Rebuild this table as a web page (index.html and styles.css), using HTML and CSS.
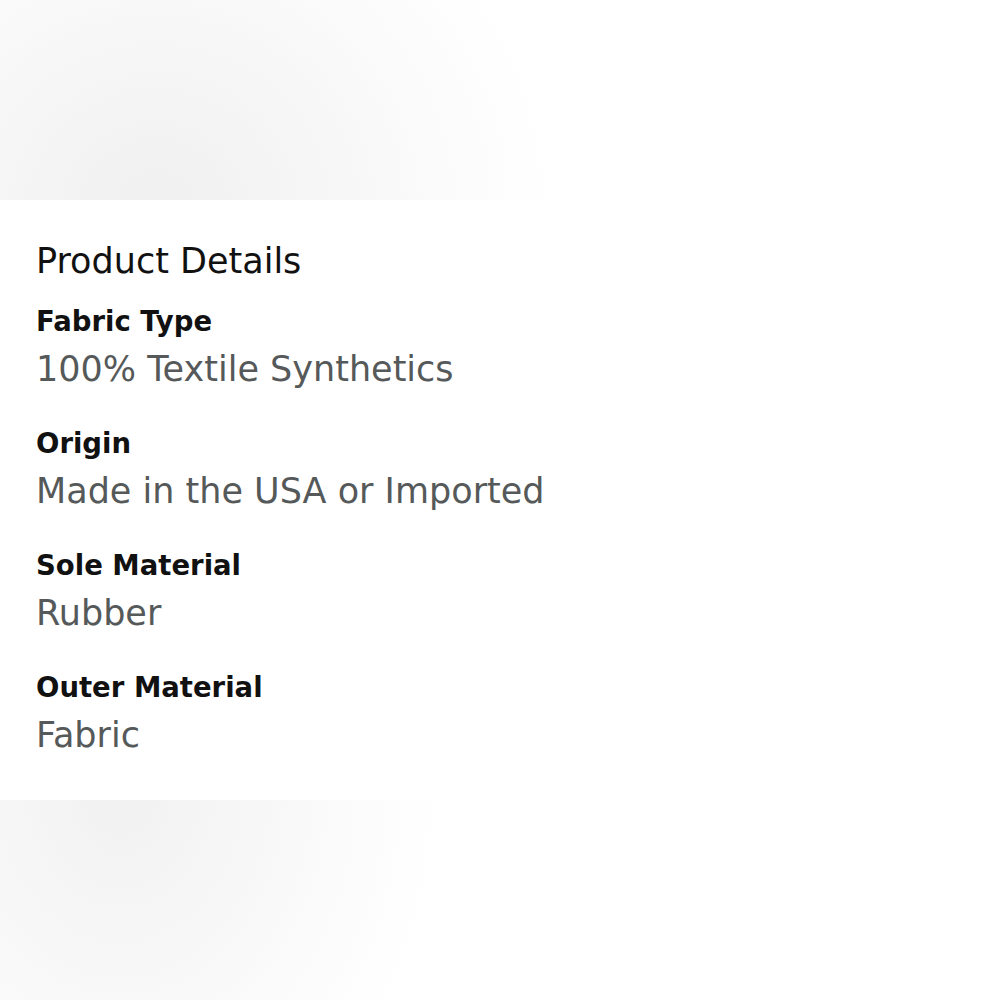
FILE: index.html
```html
<!DOCTYPE html>
<html lang="en">
<head>
<meta charset="utf-8">
<title>Product Details</title>
<link rel="stylesheet" href="styles.css">
</head>
<body>
<div class="band band-top"></div>
<section class="details">
  <h2 class="title">Product Details</h2>
  <dl class="list">
    <div class="item">
      <dt class="label">Fabric Type</dt>
      <dd class="value">100% Textile Synthetics</dd>
    </div>
    <div class="item">
      <dt class="label">Origin</dt>
      <dd class="value">Made in the USA or Imported</dd>
    </div>
    <div class="item">
      <dt class="label">Sole Material</dt>
      <dd class="value">Rubber</dd>
    </div>
    <div class="item">
      <dt class="label">Outer Material</dt>
      <dd class="value">Fabric</dd>
    </div>
  </dl>
</section>
<div class="band band-bottom"></div>
</body>
</html>
```

FILE: styles.css
```css
html, body {
  margin: 0;
  padding: 0;
  background: #ffffff;
}
body {
  width: 1000px;
  height: 1000px;
  overflow: hidden;
  font-family: "DejaVu Sans", "Open Sans", sans-serif;
}
.band {
  height: 200px;
}
.band-top {
  background: radial-gradient(ellipse 400px 380px at 155px 210px, #f0f0f0 0%, #f5f5f5 35%, #fafafa 65%, #ffffff 100%);
}
.band-bottom {
  background: radial-gradient(ellipse 320px 400px at 120px -10px, #f1f1f1 0%, #f6f6f6 35%, #fbfbfb 70%, #ffffff 100%);
}
.details {
  height: 600px;
  box-sizing: border-box;
  padding: 41px 0 0 36px;
  background: #ffffff;
}
.title {
  margin: 0 0 22px;
  font-size: 35px;
  line-height: 40px;
  font-weight: 400;
  color: #111111;
}
.list {
  margin: 0;
  display: flex;
  flex-direction: column;
  gap: 34px;
}
.item {
  display: flex;
  flex-direction: column;
  gap: 8px;
}
.label {
  font-size: 27.5px;
  line-height: 36px;
  font-weight: 700;
  color: #111111;
}
.value {
  margin: 0;
  font-size: 35px;
  line-height: 44px;
  color: #565959;
}
```
